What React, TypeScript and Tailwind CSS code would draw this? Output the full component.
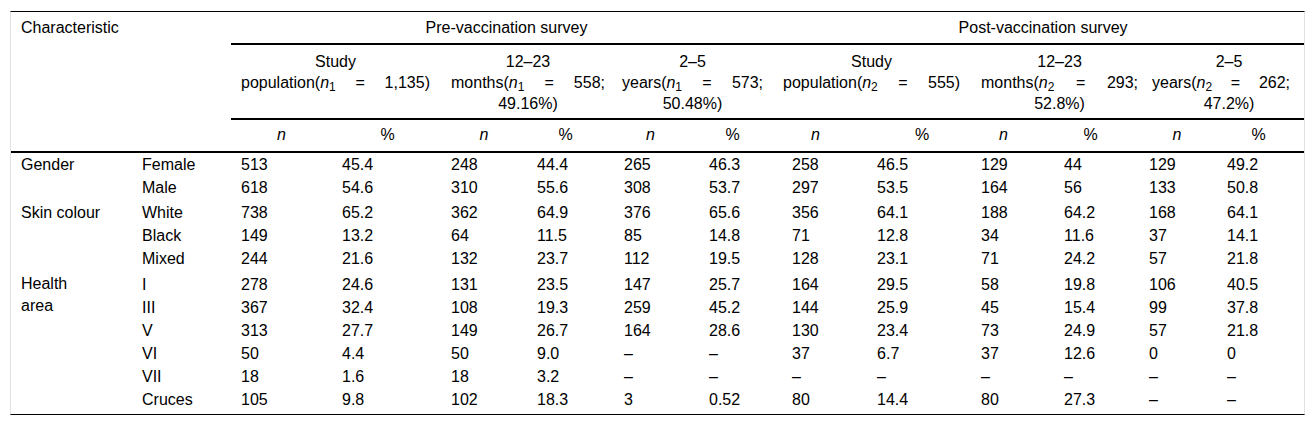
const rows: { group?: string; span?: number; label: string; vals: string[] }[] = [
  { group: "Gender", span: 2, label: "Female", vals: ["513", "45.4", "248", "44.4", "265", "46.3", "258", "46.5", "129", "44", "129", "49.2"] },
  { label: "Male", vals: ["618", "54.6", "310", "55.6", "308", "53.7", "297", "53.5", "164", "56", "133", "50.8"] },
  { group: "Skin colour", span: 3, label: "White", vals: ["738", "65.2", "362", "64.9", "376", "65.6", "356", "64.1", "188", "64.2", "168", "64.1"] },
  { label: "Black", vals: ["149", "13.2", "64", "11.5", "85", "14.8", "71", "12.8", "34", "11.6", "37", "14.1"] },
  { label: "Mixed", vals: ["244", "21.6", "132", "23.7", "112", "19.5", "128", "23.1", "71", "24.2", "57", "21.8"] },
  { group: "Health area", span: 6, label: "I", vals: ["278", "24.6", "131", "23.5", "147", "25.7", "164", "29.5", "58", "19.8", "106", "40.5"] },
  { label: "III", vals: ["367", "32.4", "108", "19.3", "259", "45.2", "144", "25.9", "45", "15.4", "99", "37.8"] },
  { label: "V", vals: ["313", "27.7", "149", "26.7", "164", "28.6", "130", "23.4", "73", "24.9", "57", "21.8"] },
  { label: "VI", vals: ["50", "4.4", "50", "9.0", "–", "–", "37", "6.7", "37", "12.6", "0", "0"] },
  { label: "VII", vals: ["18", "1.6", "18", "3.2", "–", "–", "–", "–", "–", "–", "–", "–"] },
  { label: "Cruces", vals: ["105", "9.8", "102", "18.3", "3", "0.52", "80", "14.4", "80", "27.3", "–", "–"] },
];

// n / % column headings, padding nudges them to where the original puts them
const unitHeads = [
  { t: "n", pad: "" },
  { t: "%", pad: "pl-[2px]" },
  { t: "n", pad: "" },
  { t: "%", pad: "pr-[10px]" },
  { t: "n", pad: "pr-[12px]" },
  { t: "%", pad: "pr-[16px]" },
  { t: "n", pad: "pr-[18px]" },
  { t: "%", pad: "pl-[6px]" },
  { t: "n", pad: "pr-[18px]" },
  { t: "%", pad: "pr-[12px]" },
  { t: "n", pad: "pr-[2px]" },
  { t: "%", pad: "pr-[4px]" },
];

function N({ i }: { i: number }) {
  return (
    <>
      <i>n</i>
      <sub>{i}</sub>
    </>
  );
}

// justified middle line of a sub-header
function J({ a, b }: { a: React.ReactNode; b: string }) {
  return (
    <div className="flex justify-between">
      <span>{a}</span>
      <span>=</span>
      <span>{b}</span>
    </div>
  );
}

const subHead =
  "align-top border-b-2 border-black pt-[6px] pb-[4px] leading-[21px] font-normal";
const nHead =
  "border-b-2 border-black pt-[5px] pb-[7px] text-center font-normal";

export default function App() {
  return (
    <div className="min-h-[427px] bg-white pt-[11px] pl-[10px] font-['Liberation_Sans',Arial,sans-serif] text-[16px] text-black">
      <table className="w-[1295px] table-fixed border-separate border-spacing-0 border-x border-t border-b border-x-[#e2e2e2] border-t-black border-b-black leading-[19px]">
        <colgroup>
          <col className="w-[121px]" />
          <col className="w-[99px]" />
          <col className="w-[101px]" />
          <col className="w-[109px]" />
          <col className="w-[86px]" />
          <col className="w-[87px]" />
          <col className="w-[85px]" />
          <col className="w-[83px]" />
          <col className="w-[85px]" />
          <col className="w-[104px]" />
          <col className="w-[83px]" />
          <col className="w-[85px]" />
          <col className="w-[78px]" />
          <col className="w-[87px]" />
        </colgroup>
        <thead>
          <tr>
            <th
              colSpan={2}
              rowSpan={3}
              className="align-top border-b-2 border-black pt-[6px] pl-[10px] text-left font-normal"
            >
              Characteristic
            </th>
            <th colSpan={6} className="border-b-2 border-black py-[6px] text-center font-normal">
              Pre-vaccination survey
            </th>
            <th colSpan={6} className="border-b-2 border-black py-[6px] text-center font-normal">
              Post-vaccination survey
            </th>
          </tr>
          <tr>
            <th colSpan={2} className={`${subHead} pl-[10px] pr-[11px]`}>
              <div className="text-center">Study</div>
              <J a={<>population(<N i={1} /></>} b="1,135)" />
            </th>
            <th colSpan={2} className={`${subHead} pl-[10px] pr-[9px]`}>
              <div className="text-center">12–23</div>
              <J a={<>months(<N i={1} /></>} b="558;" />
              <div className="text-center">49.16%)</div>
            </th>
            <th colSpan={2} className={`${subHead} pl-[8px] pr-[19px]`}>
              <div className="text-center">2–5</div>
              <J a={<>years(<N i={1} /></>} b="573;" />
              <div className="text-center">50.48%)</div>
            </th>
            <th colSpan={2} className={`${subHead} pl-[1px] pr-[11px]`}>
              <div className="text-center">Study</div>
              <J a={<>population(<N i={2} /></>} b="555)" />
            </th>
            <th colSpan={2} className={`${subHead} pl-[10px] pr-[1px]`}>
              <div className="text-center">12–23</div>
              <J a={<>months(<N i={2} /></>} b="293;" />
              <div className="text-center">52.8%)</div>
            </th>
            <th colSpan={2} className={`${subHead} pl-[13px] pr-[14px]`}>
              <div className="pl-[16px] text-center">2–5</div>
              <J a={<>years(<N i={2} /></>} b="262;" />
              <div className="pl-[16px] text-center">47.2%)</div>
            </th>
          </tr>
          <tr>
            {unitHeads.map((h, k) => (
              <th key={k} className={`${nHead} ${h.pad}`}>
                {h.t === "n" ? <i>n</i> : "%"}
              </th>
            ))}
          </tr>
        </thead>
        <tbody>
          {rows.map((r, idx) => {
            const last = idx === rows.length - 1;
            const pt =
              idx === 0 ? "pt-[2px]" : r.group === "Health area" ? "pt-[5px]" : r.group ? "pt-[4px]" : "pt-[2px]";
            const pb = last ? "pb-[5px]" : "pb-[2px]";
            return (
              <tr key={r.label}>
                {r.group && (
                  <td
                    rowSpan={r.span}
                    className={`align-top pl-[10px] ${r.group === "Health area" ? "leading-[22px] pt-[3px]" : pt}`}
                  >
                    {r.group === "Health area" ? (
                      <>
                        Health
                        <br />
                        area
                      </>
                    ) : (
                      r.group
                    )}
                  </td>
                )}
                <td className={`pl-[10px] ${pt} ${pb}`}>{r.label}</td>
                {r.vals.map((v, k) => (
                  <td key={k} className={`pl-[10px] ${pt} ${pb}`}>
                    {v}
                  </td>
                ))}
              </tr>
            );
          })}
        </tbody>
      </table>
    </div>
  );
}
